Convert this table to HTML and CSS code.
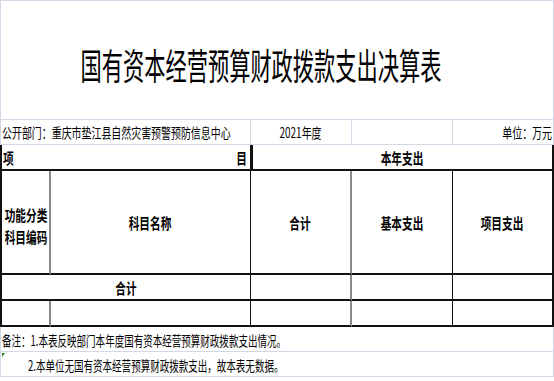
FILE: index.html
```html
<!DOCTYPE html>
<html lang="zh-CN">
<head>
<meta charset="utf-8">
<title>国有资本经营预算财政拨款支出决算表</title>
<link rel="stylesheet" href="styles.css">
</head>
<body>
<div class="sheet">
  <div class="c title span5 first top"><span class="sx title-text">国有资本经营预算财政拨款支出决算表</span></div>

  <div class="c span2 first left-al"><span class="sx ol">公开部门：重庆市垫江县自然灾害预警预防信息中心</span></div>
  <div class="c center"><span class="sx">2021年度</span></div>
  <div class="c"></div>
  <div class="c right-al"><span class="sx or">单位：万元</span></div>

  <div class="c span2 first d db dr between b"><span class="sx ol">项</span><span class="sx or">目</span></div>
  <div class="c span3 center d db dR b"><span class="sx">本年支出</span></div>

  <div class="c first d db gr center b"><span class="sx two">功能分类<br>科目编码</span></div>
  <div class="c center db dr b"><span class="sx">科目名称</span></div>
  <div class="c center db gr b"><span class="sx">合计</span></div>
  <div class="c center db dr b"><span class="sx">基本支出</span></div>
  <div class="c center db dR b"><span class="sx">项目支出</span></div>

  <div class="c span2 first d db dr center b"><span class="sx">合计</span></div>
  <div class="c db gr"></div>
  <div class="c db dr"></div>
  <div class="c db dR"></div>

  <div class="c first d db gr"></div>
  <div class="c db dr"></div>
  <div class="c db gr"></div>
  <div class="c db dr"></div>
  <div class="c db dR"></div>

  <div class="c span5 first left-al note"><span class="sx ol nt">备注：1.本表反映部门本年度国有资本经营预算财政拨款支出情况。</span></div>
  <div class="c span5 first left-al note note2"><i class="flag"></i><span class="sx ol nt">2.本单位无国有资本经营预算财政拨款支出，故本表无数据。</span></div>
</div>
</body>
</html>
```

FILE: styles.css
```css
:root {
  --lt: #d3d8e6;
  --dk: #111111;
  --gy: #8a8a8a;
}
html, body {
  margin: 0;
  padding: 0;
  background: #ffffff;
}
.sheet {
  display: grid;
  grid-template-columns: 51px 200px 101px 101px 101px;
  grid-template-rows: 120px 25px 26px 104px 26px 26px 25px 25px;
  width: 554px;
  font-family: "Noto Sans CJK SC", "Liberation Sans", sans-serif;
  color: #000;
}
.c {
  box-sizing: border-box;
  border-right: 1px solid var(--lt);
  border-bottom: 1px solid var(--lt);
  display: flex;
  align-items: center;
  font-size: 14px;
  line-height: 1;
  white-space: nowrap;
  overflow: visible;
  position: relative;
  min-width: 0;
}
.first { border-left: 1px solid var(--lt); }
.top { border-top: 1px solid var(--lt); }
.span2 { grid-column: span 2; }
.span3 { grid-column: span 3; }
.span5 { grid-column: span 5; }
.center { justify-content: center; }
.left-al { justify-content: flex-start; padding-left: 1px; }
.right-al { justify-content: flex-end; padding-right: 1px; }
.between { justify-content: space-between; padding: 0 3px 0 1px; }

.d { border-left: 2px solid var(--dk); }
.db { border-bottom: 2px solid var(--dk); }
.dr { border-right: 1px solid var(--dk); }
.dR { border-right: 2px solid var(--dk); }
.gr { border-right: 2px solid var(--gy); }
.b { font-weight: 700; font-size: 15px; }

.sx {
  display: inline-block;
  flex: none;
  transform: scaleX(0.71);
  transform-origin: center;
}
.sx.ol { transform-origin: left center; }
.sx.or { transform-origin: right center; }
.sx.nt { transform: scaleX(0.68); }
.sx.two { line-height: 22px; text-align: center; margin-top: 7px; }

.title {
  justify-content: center;
  padding-right: 33px;
  padding-top: 8px;
}
.title-text {
  font-size: 36px;
  font-weight: 400;
  transform: scaleX(0.59);
}
.note { padding-top: 1px; }
.note2 { padding-left: 27px; }
.flag {
  position: absolute;
  left: 1px;
  top: 1px;
  width: 0;
  height: 0;
  border-top: 4px solid #1f8a1f;
  border-right: 3px solid transparent;
}
```
